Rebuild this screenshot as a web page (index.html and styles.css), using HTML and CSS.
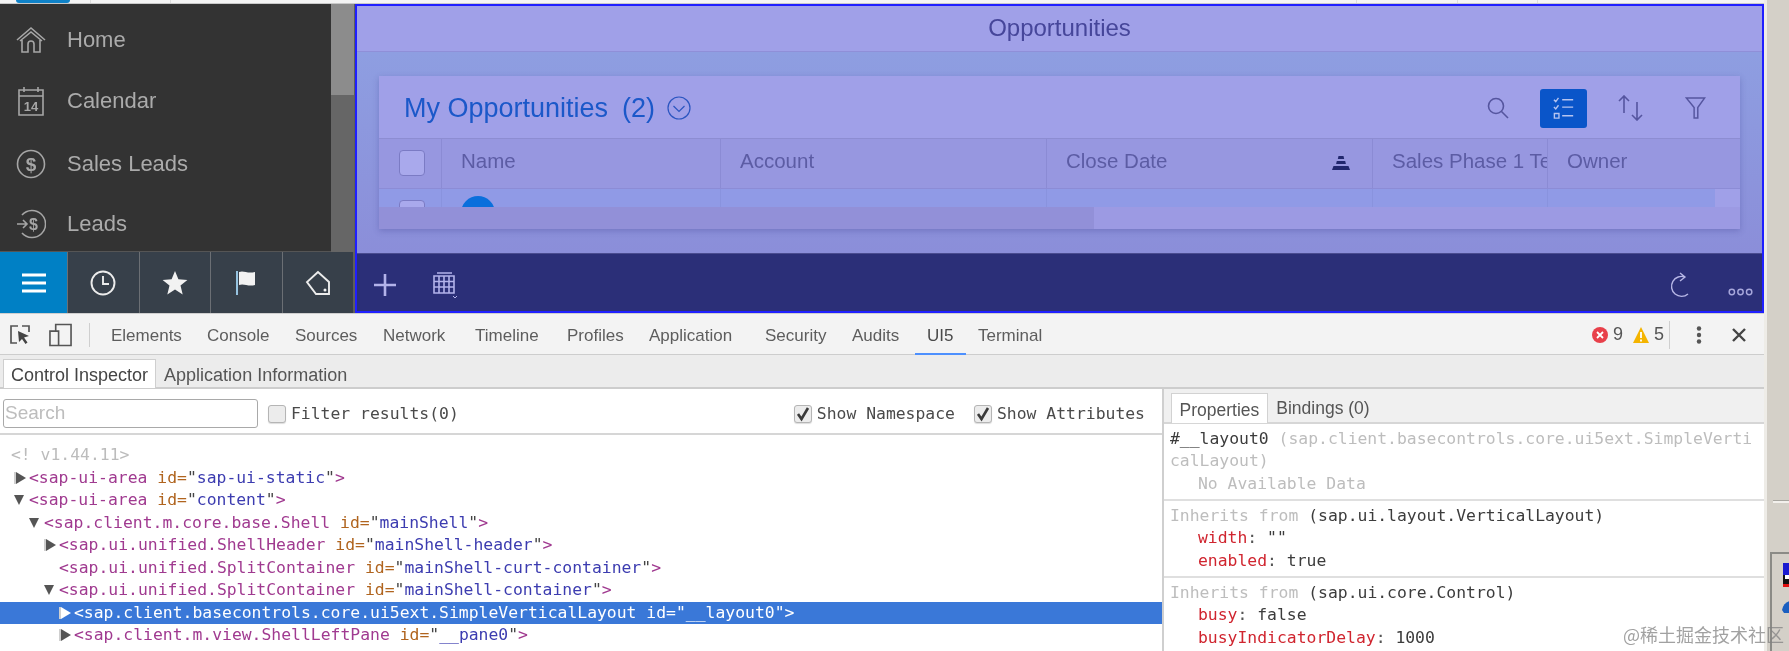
FILE: index.html
```html
<!DOCTYPE html>
<html lang="en">
<head>
<meta charset="utf-8">
<title>Opportunities - UI5 Inspector</title>
<link rel="stylesheet" href="styles.css">
</head>
<body>
<div class="page">
  <div class="main">
    <div class="browser-strip">
      <span class="strip-tab"></span><span class="strip-sep s1"></span><span class="strip-sep s2"></span><span class="strip-sep s3"></span><span class="strip-sep s4"></span><span class="strip-sep s5"></span>
    </div>
    <div class="app">
      <aside class="nav">
        <div class="nav-top">
          <ul class="nav-list">
            <li class="nav-item">
              <svg class="nav-icon" viewBox="0 0 30 30"><path d="M1 15 15 3l14 12M4 16 15 7l11 9M6 15v12h6v-8a3 3 0 0 1 6 0v8h6V15"/></svg>
              <span>Home</span>
            </li>
            <li class="nav-item">
              <svg class="nav-icon" viewBox="0 0 30 30"><path d="M3 4h24v25H3zM3 10h24M8 1v5M22 1v5"/><text x="15" y="25" class="cal-num">14</text></svg>
              <span>Calendar</span>
            </li>
            <li class="nav-item third">
              <svg class="nav-icon" viewBox="0 0 30 30"><circle cx="15" cy="15" r="13.5"/><text x="15" y="21.5" class="money">$</text></svg>
              <span>Sales Leads</span>
            </li>
            <li class="nav-item fourth">
              <svg class="nav-icon" viewBox="0 0 30 30"><path d="M6 6A13.500 13.500 0 1 1 6 24M1 15h10M7 11l4 4-4 4"/><text x="17.500" y="20.500" class="money small">$</text></svg>
              <span>Leads</span>
            </li>
          </ul>
          <div class="scrollbar"><div class="scroll-thumb"></div></div>
        </div>
        <div class="nav-bar">
          <div class="bar-cell active"><svg class="bar-icon" viewBox="0 0 26 20"><path d="M1 2h24M1 10h24M1 18h24" class="menu-lines"/></svg></div>
          <div class="bar-cell"><svg class="bar-icon" viewBox="0 0 26 26"><circle cx="13" cy="13" r="11.500"/><path d="M13 6v8h6"/></svg></div>
          <div class="bar-cell"><svg class="bar-icon" viewBox="0 0 26 26"><path class="solid" d="M13 1l3.400 8.300 9 .600-6.900 5.700 2.200 8.800L13 19.600l-7.700 4.800 2.200-8.800L.6 9.900l9-.6z"/></svg></div>
          <div class="bar-cell"><svg class="bar-icon" viewBox="0 0 26 26"><path d="M4 1v24" class="pole"/><path class="solid" d="M6 2c5-2 8 2 16 0v13c-7 2-11-2-16 0z"/></svg></div>
          <div class="bar-cell"><svg class="bar-icon" viewBox="0 0 26 26"><path d="M13 2 2 12l9 12h13V12z"/><circle class="solid" cx="20" cy="20" r="1.500"/></svg></div>
        </div>
      </aside>
      <section class="overlay">
        <header class="page-title">Opportunities</header>
        <div class="content">
          <div class="panel">
            <div class="panel-toolbar">
              <h1 class="panel-title">My Opportunities</h1>
              <span class="panel-count">(2)</span>
              <svg class="chevron" viewBox="0 0 24 24"><circle cx="12" cy="12" r="11"/><path d="M6.500 10l5.500 5.500 5.500-5.500"/></svg>
              <div class="actions">
                <svg class="act search" viewBox="0 0 22 22"><circle cx="9" cy="9" r="7.500"/><path d="m14.500 14.500 6.500 6.500"/></svg>
                <div class="act-btn"><svg viewBox="0 0 24 24"><path d="M1 3l2 2 3-4M10 3h12M1 11l2 2 3-4M10 11h12M1.500 18h5v5h-5zM10 20.500h12"/></svg></div>
                <svg class="act arrows" viewBox="0 0 26 26"><path d="M7 18V1M2 6l5-5 5 5M20 7v18M15 20l5 5 5-5"/></svg>
                <svg class="act funnel" viewBox="0 0 22 24"><path d="M1 1h20l-7.500 10.500V23h-4V11.500z"/></svg>
              </div>
            </div>
            <div class="table-row table-head">
              <div class="cell"><span class="tbl-check"></span></div>
              <div class="cell">Name</div>
              <div class="cell">Account</div>
              <div class="cell sorted">Close Date
                <svg class="sort-icon" viewBox="0 0 20 14"><path d="M7.500 0h5l.7 3H6.800zM5.800 5h8.400l.7 3H5.100zM2.500 10h15l1.500 4H1z"/></svg>
              </div>
              <div class="cell">Sales Phase 1 Text</div>
              <div class="cell last">Owner</div>
            </div>
            <div class="table-row table-body">
              <div class="cell"><span class="tbl-check low"></span></div>
              <div class="cell"><span class="avatar"></span></div>
              <div class="cell"></div>
              <div class="cell date">08.05.2017</div>
              <div class="cell date">01</div>
              <div class="cell last"></div>
            </div>
            <div class="panel-strip"><div class="strip-left"></div></div>
          </div>
        </div>
        <footer class="app-footer">
          <svg class="foot plus" viewBox="0 0 24 24"><path d="M12 1v22M1 12h22"/></svg>
          <svg class="foot grid" viewBox="0 0 26 26"><path d="M4 1h15M1 4h20v17H1zM1 9.500h20M1 15h20M6 4v17M11 4v17M16 4v17"/><path d="m20 24 2 2 2-2" class="thin"/></svg>
          <svg class="foot refresh" viewBox="0 0 24 24"><path d="M17 4a10 10 0 1 0 3 17M12 0l5 4-5 4"/></svg>
          <svg class="foot dots" viewBox="0 0 26 8"><circle cx="4" cy="4" r="2.800"/><circle cx="13" cy="4" r="2.800"/><circle cx="22" cy="4" r="2.800"/></svg>
        </footer>
      </section>
    </div>
    <div class="devtools">
      <div class="dt-toolbar">
        <svg class="dt-icon inspect" viewBox="0 0 20 20"><path d="M8 1H1v17h6M12 1h7v6"/><path class="solid" d="M8 6l11 5-5 1.500 3.500 5-2 1.500-3.500-5-3 3z"/></svg>
        <svg class="dt-icon device" viewBox="0 0 24 24"><path d="M7 8V1h16v22H1V8h9v15"/></svg>
        <span class="dt-sep"></span>
        <nav class="dt-tabs">
          <span class="dt-tab">Elements</span><span class="dt-tab">Console</span><span class="dt-tab">Sources</span><span class="dt-tab">Network</span><span class="dt-tab">Timeline</span><span class="dt-tab">Profiles</span><span class="dt-tab">Application</span><span class="dt-tab">Security</span><span class="dt-tab">Audits</span><span class="dt-tab on">UI5</span><span class="dt-tab">Terminal</span>
        </nav>
        <div class="dt-status">
          <svg class="err" viewBox="0 0 16 16"><circle cx="8" cy="8" r="8"/><path d="m5 5 6 6M11 5l-6 6"/></svg>
          <span class="num">9</span>
          <svg class="warn" viewBox="0 0 16 16"><path d="M8 0l8 16H0z"/><path class="mark" d="M8 5v6M8 12.500v2"/></svg>
          <span class="num">5</span>
          <span class="dt-sep short"></span>
          <svg class="kebab" viewBox="0 0 6 18"><circle cx="3" cy="2.500" r="2.200"/><circle cx="3" cy="9" r="2.200"/><circle cx="3" cy="15.500" r="2.200"/></svg>
          <svg class="close" viewBox="0 0 14 14"><path d="m1 1 12 12M13 1 1 13"/></svg>
        </div>
      </div>
      <div class="subtabs">
        <span class="subtab on">Control Inspector</span><span class="subtab">Application Information</span>
      </div>
      <div class="split">
        <div class="left">
          <div class="filters">
            <span class="search-box">Search</span>
            <span class="box"></span><span class="mono-label">Filter results(0)</span>
            <span class="spacer"></span>
            <span class="box checked"><svg viewBox="0 0 16 16"><path d="m3 8 3.500 5L13 2"/></svg></span><span class="mono-label">Show Namespace</span>
            <span class="box checked second"><svg viewBox="0 0 16 16"><path d="m3 8 3.500 5L13 2"/></svg></span><span class="mono-label">Show Attributes</span>
          </div>
          <div class="tree">
            <div class="node comment">&lt;! v1.44.11&gt;</div>
            <div class="node l1"><i class="arrow right"></i><span class="t">&lt;sap-ui-area</span> <span class="a">id=</span><span class="q">"</span><span class="v">sap-ui-static</span><span class="q">"</span><span class="t">&gt;</span></div>
            <div class="node l1"><i class="arrow down"></i><span class="t">&lt;sap-ui-area</span> <span class="a">id=</span><span class="q">"</span><span class="v">content</span><span class="q">"</span><span class="t">&gt;</span></div>
            <div class="node l2"><i class="arrow down"></i><span class="t">&lt;sap.client.m.core.base.Shell</span> <span class="a">id=</span><span class="q">"</span><span class="v">mainShell</span><span class="q">"</span><span class="t">&gt;</span></div>
            <div class="node l3"><i class="arrow right"></i><span class="t">&lt;sap.ui.unified.ShellHeader</span> <span class="a">id=</span><span class="q">"</span><span class="v">mainShell-header</span><span class="q">"</span><span class="t">&gt;</span></div>
            <div class="node l3"><i class="arrow"></i><span class="t">&lt;sap.ui.unified.SplitContainer</span> <span class="a">id=</span><span class="q">"</span><span class="v">mainShell-curt-container</span><span class="q">"</span><span class="t">&gt;</span></div>
            <div class="node l3"><i class="arrow down"></i><span class="t">&lt;sap.ui.unified.SplitContainer</span> <span class="a">id=</span><span class="q">"</span><span class="v">mainShell-container</span><span class="q">"</span><span class="t">&gt;</span></div>
            <div class="node l4 selected"><i class="arrow right"></i>&lt;sap.client.basecontrols.core.ui5ext.SimpleVerticalLayout id="__layout0"&gt;</div>
            <div class="node l4"><i class="arrow right"></i><span class="t">&lt;sap.client.m.view.ShellLeftPane</span> <span class="a">id=</span><span class="q">"</span><span class="v">__pane0</span><span class="q">"</span><span class="t">&gt;</span></div>
            <div class="node l3"><i class="arrow right"></i><span class="t">&lt;sap.ui.unified.ShellOverlay</span> <span class="a">id=</span><span class="q">"</span><span class="v">__overlay0</span><span class="q">"</span><span class="t">&gt;</span></div>
          </div>
        </div>
        <div class="right">
          <div class="right-tabs">
            <span class="right-tab on">Properties</span><span class="right-tab">Bindings (0)</span>
          </div>
          <div class="sect">
            <div class="wrap"><span class="dark">#__layout0</span> <span class="gray">(sap.client.basecontrols.core.ui5ext.SimpleVerticalLayout)</span></div>
            <div class="prop gray">No Available Data</div>
          </div>
          <div class="sect">
            <div><span class="gray">Inherits from</span> <span class="dark">(sap.ui.layout.VerticalLayout)</span></div>
            <div class="prop"><span class="key">width</span>: <span class="dark">""</span></div>
            <div class="prop"><span class="key">enabled</span>: <span class="dark">true</span></div>
          </div>
          <div class="sect">
            <div><span class="gray">Inherits from</span> <span class="dark">(sap.ui.core.Control)</span></div>
            <div class="prop"><span class="key">busy</span>: <span class="dark">false</span></div>
            <div class="prop"><span class="key">busyIndicatorDelay</span>: <span class="dark">1000</span></div>
            <div class="prop"><span class="key">visible</span>: <span class="dark">true</span></div>
          </div>
        </div>
      </div>
    </div>
  </div>
  <aside class="desktop">
    <div class="desktop-line"></div>
    <div class="tray">
      <svg class="tray-a" viewBox="0 0 8 26"><rect x="0" y="2" width="8" height="12" fill="#1a1ad0"/><rect x="0" y="14" width="8" height="9" fill="#111"/><rect x="2" y="14" width="4" height="4" fill="#fff"/><rect x="0" y="23" width="8" height="3" fill="#e01010"/></svg>
      <svg class="tray-b" viewBox="0 0 8 12"><path d="M0 9C1 4 4 1 8 0v12H2z" fill="#1a5fc0"/></svg>
    </div>
  </aside>
  <div class="watermark">@稀土掘金技术社区</div>
</div>
</body>
</html>
```
FILE: styles.css
```css
* { box-sizing: border-box; }
html, body { margin: 0; padding: 0; background: #f2f2f2; }
body { width: 1789px; height: 651px; overflow: hidden; font-family: "Liberation Sans", Arial, sans-serif; }
ul { list-style: none; margin: 0; padding: 0; }
h1 { margin: 0; font: inherit; }
svg { display: block; flex: none; fill: none; }

.page { position: relative; display: flex; width: 1789px; height: 651px; overflow: hidden; filter: blur(0.45px); }
.main { width: 1764px; display: flex; flex-direction: column; }

/* browser strip */
.browser-strip { height: 4px; background: #f4f4f4; border-bottom: 1px solid #c9c9c9; display: flex; }
.strip-tab { width: 54px; height: 3px; margin-left: 16px; background: #0f82c8; border-radius: 0 0 4px 4px; }
.strip-sep { width: 1px; height: 3px; background: #ddd; }
.s1 { margin-left: 20px; }
.s2 { margin-left: 79px; }
.s3 { margin-left: 1185px; }
.s4 { margin-left: 100px; }
.s5 { margin-left: 79px; }

.app { display: flex; height: 309px; }

/* left nav */
.nav { width: 355px; flex: none; display: flex; flex-direction: column; background: #5d5d5d; }
.nav-top { display: flex; height: 248px; }
.nav-list { width: 331px; background: #333; border-bottom: 1px solid #555; padding-top: 5px; }
.nav-item { display: flex; align-items: center; gap: 21px; height: 61px; padding-left: 16px; color: #ababab; font-size: 22px; }
.nav-item.third { margin-top: 2px; }
.nav-item.fourth { margin-top: -1px; }
.nav-icon { width: 30px; height: 30px; stroke: #a6a6a6; stroke-width: 1.6; }
.cal-num { font: bold 13px "Liberation Sans", sans-serif; text-anchor: middle; fill: #a6a6a6; stroke: none; }
.money { font: bold 19px "Liberation Sans", sans-serif; text-anchor: middle; fill: #a6a6a6; stroke: none; }
.money.small { font-size: 16px; }
.scrollbar { width: 23px; background: #666; }
.scroll-thumb { height: 91px; background: #8c8c8c; }
.nav-bar { display: flex; height: 61px; width: 353px; background: #37404a; }
.bar-cell { width: 71.500px; display: flex; align-items: center; justify-content: center; border-left: 1px solid #6b6f74; }
.bar-cell.active { width: 67px; background: #0080c5; border-left: 0; }
.bar-icon { width: 26px; height: 26px; stroke: #ececec; stroke-width: 1.9; }
.bar-cell.active .bar-icon { height: 20px; stroke: #fff; }
.menu-lines { stroke-width: 3; }
.bar-icon .solid { fill: #f2f2f2; stroke: none; }
.bar-icon .pole { stroke: #9ccbe8; }

/* overlay panel */
.overlay { width: 1409px; flex: none; display: flex; flex-direction: column; border: 2px solid #1f1fff; background: #8c94dc; }
.page-title { height: 46px; flex: none; background: #a0a0e8; border-bottom: 1px solid #8f8fd8; color: #46469a; font-size: 24px; line-height: 43px; text-align: center; }
.content { flex: 1; padding: 24px 22px 0; background: linear-gradient(#8e9ee1, #8b8ed9); }
.panel { height: 153px; background: #a0a0e8; box-shadow: 0 2px 6px rgba(60, 60, 140, .3); display: flex; flex-direction: column; }
.panel-toolbar { height: 63px; flex: none; display: flex; align-items: center; padding: 2px 0 0 25px; border-bottom: 1px solid #8d8dd2; color: #1b58c9; font-size: 27px; }
.panel-count { margin-left: 14px; }
.chevron { width: 24px; height: 24px; margin-left: 12px; stroke: #2b55c0; stroke-width: 1.2; }
.actions { margin-left: auto; display: flex; align-items: center; padding-right: 34px; }
.act { stroke: #55559f; stroke-width: 1.6; }
.search { width: 22px; height: 22px; }
.act-btn { width: 47px; height: 39px; margin-left: 31px; border-radius: 3px; background: #0a55c9; display: flex; align-items: center; justify-content: center; }
.act-btn svg { width: 22px; height: 24px; stroke: #b6c4f0; stroke-width: 1.500; }
.arrows { width: 26px; height: 26px; margin-left: 30px; }
.funnel { width: 21px; height: 22px; margin-left: 42px; }

.table-row { display: grid; grid-template-columns: 63px 279px 326px 326px 175px 167px; flex: none; }
.table-head { height: 50px; background: #9797e0; border-bottom: 1px solid #8c8cd6; color: #5c5ca4; font-size: 20.500px; }
.table-head .cell { display: flex; align-items: center; padding: 0 0 6px 19px; white-space: nowrap; overflow: hidden; border-right: 1px solid #8b8bd4; }
.table-head .cell:first-child { padding: 0 0 1px 20px; }
.table-head .cell.last { border-right: 0; }
.table-head .sorted { justify-content: space-between; padding-right: 21px; }
.sort-icon { width: 20px; height: 14px; fill: #21276e; margin-top: 4px; }
.tbl-check { display: block; width: 26px; height: 26px; border: 1px solid #7b7bc4; border-radius: 4px; background: #a9a9ec; }
.table-body { height: 18px; width: 1336px; background: #909ae6; overflow: hidden; color: #232a63; font-size: 19px; }
.table-body .cell { overflow: hidden; border-right: 1px solid #8993de; height: 18px; }
.table-body .cell.last { border-right: 0; }
.tbl-check.low { margin: 11px 0 0 20px; height: 20px; }
.avatar { display: block; width: 34px; height: 34px; margin: 7px 0 0 19px; border-radius: 50%; background: radial-gradient(circle at 50% 55%, #15275f 0 6px, #0a6fdc 7px); }
.date { padding: 16px 0 0 19px; line-height: 22px; }
.panel-strip { height: 22px; background: #9c9ae3; }
.strip-left { width: 715px; height: 22px; background: #9290d8; }

.app-footer { height: 58px; flex: none; display: flex; align-items: center; padding: 5px 9px 0 16px; background: #2b2f78; border-top: 1px solid #4a4c90; }
.foot { stroke: #b3b3ea; stroke-width: 1.400; }
.plus { width: 24px; height: 24px; stroke-width: 2.600; }
.grid { width: 26px; height: 26px; margin-left: 36px; stroke-width: 1.600; }
.grid .thin { stroke-width: 1; }
.refresh { width: 24px; height: 26px; margin-left: auto; stroke: #b7b7e6; }
.dots { width: 25px; height: 8px; margin: 14px 0 0 36px; stroke: #a8a8dc; stroke-width: 1.500; }

/* devtools */
.devtools { flex: 1; display: flex; flex-direction: column; min-height: 0; background: #fff; border-top: 1px solid #cfcfcf; }
.dt-toolbar { height: 41px; flex: none; display: flex; align-items: center; padding: 1px 18px 0 10px; background: #f3f3f3; border-bottom: 1px solid #cdcdcd; }
.dt-icon { stroke: #555; stroke-width: 1.700; }
.inspect { width: 20px; height: 20px; }
.inspect .solid { fill: #444; stroke: none; }
.device { width: 23px; height: 24px; margin-left: 19px; }
.dt-sep { width: 1px; height: 24px; margin-left: 17px; background: #cfcfcf; }
.dt-tabs { display: flex; align-self: stretch; margin-left: 8.500px; }
.dt-tab { position: relative; display: flex; align-items: center; padding: 2px 0 0 12.500px; font-size: 17px; color: #5d5d5d; white-space: nowrap; }
.dt-tab:nth-child(1) { width: 96px; }
.dt-tab:nth-child(2) { width: 88px; }
.dt-tab:nth-child(3) { width: 88px; }
.dt-tab:nth-child(4) { width: 92px; }
.dt-tab:nth-child(5) { width: 92px; }
.dt-tab:nth-child(6) { width: 82px; }
.dt-tab:nth-child(7) { width: 116px; }
.dt-tab:nth-child(8) { width: 87px; }
.dt-tab:nth-child(9) { width: 75px; }
.dt-tab:nth-child(10) { width: 51px; }
.dt-tab.on { color: #4a4a4a; }
.dt-tab.on::after { content: ""; position: absolute; left: 0; right: 0; bottom: -1px; height: 2px; background: #4d90fe; }
.dt-status { margin-left: auto; display: flex; align-items: center; font-size: 18px; color: #555; }
.err { width: 16px; height: 16px; fill: #e8404a; stroke: #fff; stroke-width: 1.800; }
.err circle { stroke: none; }
.num { margin-left: 5px; }
.warn { width: 16px; height: 16px; margin-left: 10px; fill: #f4b400; }
.warn .mark { stroke: #fff; stroke-width: 1.800; fill: none; }
.dt-sep.short { height: 28px; margin-left: 5px; }
.kebab { width: 6px; height: 18px; margin-left: 26px; fill: #555; }
.close { width: 14px; height: 14px; margin-left: 30px; stroke: #444; stroke-width: 2.400; }

.subtabs { height: 34px; flex: none; display: flex; padding: 4px 0 0 3px; background: #ececec; border-bottom: 2px solid #cdcdcd; font-size: 18px; color: #555; }
.subtab { display: flex; align-items: center; height: 29px; padding: 3px 7px 0; margin-right: 1px; white-space: nowrap; }
.subtab.on { background: #fff; border: 1px solid #cfcfcf; border-bottom: 0; color: #444; }

.split { flex: 1; display: flex; min-height: 0; font-family: "DejaVu Sans Mono", "Liberation Mono", monospace; font-size: 16.400px; }
.left { width: 1162px; flex: none; overflow: hidden; }
.filters { height: 46px; display: flex; align-items: center; padding: 5px 0 0 3px; border-bottom: 2px solid #d6d6d6; color: #4a4a4a; }
.search-box { width: 255px; height: 29px; padding-left: 1px; border: 1.500px solid #a9a9a9; border-radius: 3px; font: 19px/26px "Liberation Sans", sans-serif; color: #bdbdbd; }
.box { width: 18px; height: 18px; margin: 0 5px 0 10px; border: 1px solid #b5b5b5; border-radius: 3px; background: #ececec; box-shadow: 0 1px 1px #ddd; }
.box.checked { margin-left: 0; }
.box.second { margin-left: 19px; }
.box svg { width: 16px; height: 16px; stroke: #3a3a3a; stroke-width: 2.600; }
.mono-label { white-space: pre; }
.spacer { flex: 1; }
.filters .mono-label:last-child { margin-right: 17px; }
.tree { padding-top: 9px; height: 220px; overflow: hidden; }
.node { display: block; height: 22.500px; line-height: 22.500px; white-space: pre; }
.comment { padding-left: 11px; color: #bcbcbc; }
.l1 { padding-left: 14px; }
.l2 { padding-left: 29px; }
.l3 { padding-left: 44px; }
.l4 { padding-left: 59px; }
.arrow { display: inline-block; width: 15px; height: 12px; position: relative; vertical-align: -1px; }
.arrow.right::before { content: ""; position: absolute; left: 0; top: 0; border-left: 10px solid #555; border-top: 6px solid transparent; border-bottom: 6px solid transparent; }
.arrow.down::before { content: ""; position: absolute; left: 0; top: 1px; border-top: 10px solid #555; border-left: 5.500px solid transparent; border-right: 5.500px solid transparent; }
.t { color: #a03a90; }
.a { color: #b0641e; }
.q { color: #444; }
.v { color: #3c3cb0; }
.selected { background: #3a78d8; color: #fff; }
.selected .arrow.right::before { border-left-color: #fff; }

.right { flex: 1; min-width: 0; border-left: 2px solid #cfcfcf; overflow: hidden; }
.right-tabs { height: 35px; display: flex; align-items: flex-end; padding-left: 7px; background: #f0f0f0; border-bottom: 2px solid #d6d6d6; font: 17.500px "Liberation Sans", sans-serif; color: #555; }
.right-tab { display: flex; align-items: center; height: 30px; padding: 3px 7.500px 0; margin-right: 1px; }
.right-tab.on { background: #fff; border: 1px solid #d2d2d2; border-bottom: 0; margin-bottom: -1px; }
.sect { padding: 3.500px 6px 4px 6px; line-height: 22.500px; border-bottom: 2px solid #dfdfdf; color: #555; }
.sect:last-child { border-bottom: 0; }
.wrap { word-break: break-all; }
.prop { padding-left: 28px; }
.gray { color: #bdbdbd; }
.dark { color: #3c3c3c; }
.key { color: #d0252f; }

/* desktop behind the browser */
.desktop { flex: 1; background: #d4d0c8; border-left: 3px solid #eeece7; padding-top: 501px; }
.desktop-line { height: 2px; margin-left: 6px; background: #f2f0ec; box-shadow: 0 -1px 0 #a8a6a0; }
.tray { margin: 49px 0 0 3px; height: 99px; padding: 7px 0 0 10px; border-left: 2px solid #8b8b86; border-top: 2px solid #8b8b86; }
.tray-a { width: 8px; height: 26px; margin-left: 1px; }
.tray-b { width: 8px; height: 12px; margin: 14px 0 0 0; }

.watermark { position: absolute; left: 1623px; top: 621px; font: 18px/26px "Noto Sans CJK SC", sans-serif; color: rgba(130, 130, 130, .75); white-space: nowrap; }
```
